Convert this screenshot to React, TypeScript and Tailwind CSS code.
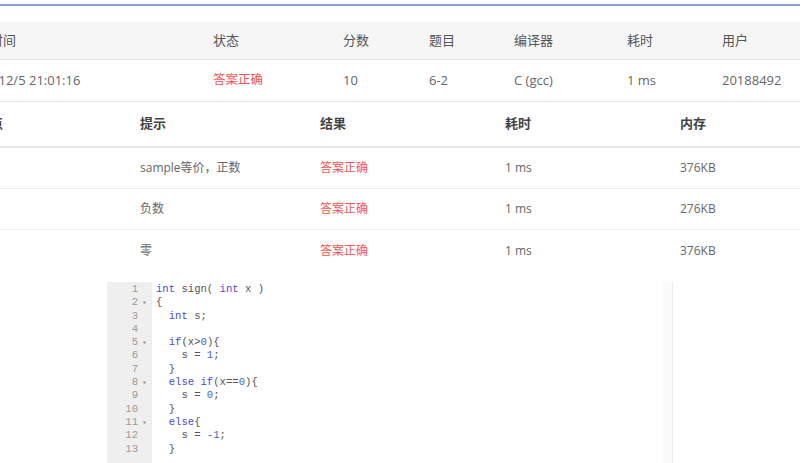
import React from "react";

const topHead = ["时间", "状态", "分数", "题目", "编译器", "耗时", "用户"];
const topRow = ["2018/12/5 21:01:16", "答案正确", "10", "6-2", "C (gcc)", "1 ms", "20188492"];

const cases = [
  { hint: "sample等价，正数", time: "1 ms", mem: "376KB" },
  { hint: "负数", time: "1 ms", mem: "276KB" },
  { hint: "零", time: "1 ms", mem: "376KB" },
];

type Tok = { t: string; c?: "k" | "n" };

const code: { fold?: boolean; toks: Tok[] }[] = [
  { toks: [{ t: "int", c: "k" }, { t: " sign( " }, { t: "int", c: "k" }, { t: " x )" }] },
  { fold: true, toks: [{ t: "{" }] },
  { toks: [{ t: "  " }, { t: "int", c: "k" }, { t: " s;" }] },
  { toks: [{ t: "" }] },
  { fold: true, toks: [{ t: "  " }, { t: "if", c: "k" }, { t: "(x>" }, { t: "0", c: "n" }, { t: "){" }] },
  { toks: [{ t: "    s = " }, { t: "1", c: "n" }, { t: ";" }] },
  { toks: [{ t: "  }" }] },
  { fold: true, toks: [{ t: "  " }, { t: "else", c: "k" }, { t: " " }, { t: "if", c: "k" }, { t: "(x==" }, { t: "0", c: "n" }, { t: "){" }] },
  { toks: [{ t: "    s = " }, { t: "0", c: "n" }, { t: ";" }] },
  { toks: [{ t: "  }" }] },
  { fold: true, toks: [{ t: "  " }, { t: "else", c: "k" }, { t: "{" }] },
  { toks: [{ t: "    s = " }, { t: "-1", c: "n" }, { t: ";" }] },
  { toks: [{ t: "  }" }] },
];

export default function App() {
  return (
    <div className="w-[806px] h-[463px] overflow-hidden bg-white font-['Open_Sans','Noto_Sans_CJK_SC',sans-serif]">
      <div className="w-[800px]">
        {/* top border of the card */}
        <div className="mt-[4px] h-[2px] bg-[#86a3d3]" />

        {/* submission summary */}
        <div className="mt-[16px] text-[13px]">
          <div className="grid grid-cols-[213px_130px_86px_85px_113px_95px_1fr] h-[38px] items-center bg-[#f6f6f6] border-b border-[#e3e3e3] text-[#555]">
            {topHead.map((h, i) => (
              <div key={h} className={`whitespace-nowrap ${i === 0 ? "-ml-[10px]" : ""}`}>
                {h}
              </div>
            ))}
          </div>
          <div className="grid grid-cols-[213px_130px_86px_85px_113px_95px_1fr] h-[42px] items-center border-b border-[#e6e6e6] text-[#666]">
            {topRow.map((v, i) => (
              <div
                key={i}
                className={`whitespace-nowrap ${i === 0 ? "-ml-[36px]" : ""} ${i === 1 ? "text-[12.5px] text-[#f25555]" : ""}`}
              >
                {v}
              </div>
            ))}
          </div>
        </div>

        {/* test point details */}
        <div className="grid grid-cols-[140px_180px_185px_175px_1fr] h-[46px] items-center border-b-2 border-[#e8e8e8] text-[13px] font-semibold text-[#444]">
          <div className="-ml-[36px] whitespace-nowrap">测试点</div>
          <div>提示</div>
          <div>结果</div>
          <div>耗时</div>
          <div>内存</div>
        </div>
        {cases.map((c, i) => (
          <div
            key={i}
            className={`grid grid-cols-[140px_180px_185px_175px_1fr] h-[41px] items-center text-[12px] text-[#666] ${i < 2 ? "border-b border-[#ececec]" : ""}`}
          >
            <div className="-ml-[36px]">{i}</div>
            <div>{c.hint}</div>
            <div className="text-[#f25555]">答案正确</div>
            <div>{c.time}</div>
            <div>{c.mem}</div>
          </div>
        ))}

        {/* source code viewer */}
        <div className="mt-[11px] ml-[107px] w-[566px] h-[200px] flex border-r border-[#ececec] font-['Liberation_Mono',monospace] text-[10.6px] leading-[13.3px]">
          <div className="w-[45px] bg-[#efefef] pt-[1px] text-[#999]">
            {code.map((l, i) => (
              <div key={i} className="flex">
                <span className="w-[31px] text-right">{i + 1}</span>
                <span className="w-[14px] pl-[4px] text-[8px]">{l.fold ? "▾" : ""}</span>
              </div>
            ))}
          </div>
          <div className="flex-1 pl-[4px] pt-[1px] text-[#555] whitespace-pre">
            {code.map((l, i) => (
              <div key={i} className="h-[13.3px]">
                {l.toks.map((tk, j) => (
                  <span
                    key={j}
                    className={tk.c === "k" ? "text-[#4b4bd2]" : tk.c === "n" ? "text-[#3f63cf]" : ""}
                  >
                    {tk.t}
                  </span>
                ))}
              </div>
            ))}
          </div>
          <div className="w-[9px] bg-[#fbfbfb]" />
        </div>
      </div>
    </div>
  );
}
